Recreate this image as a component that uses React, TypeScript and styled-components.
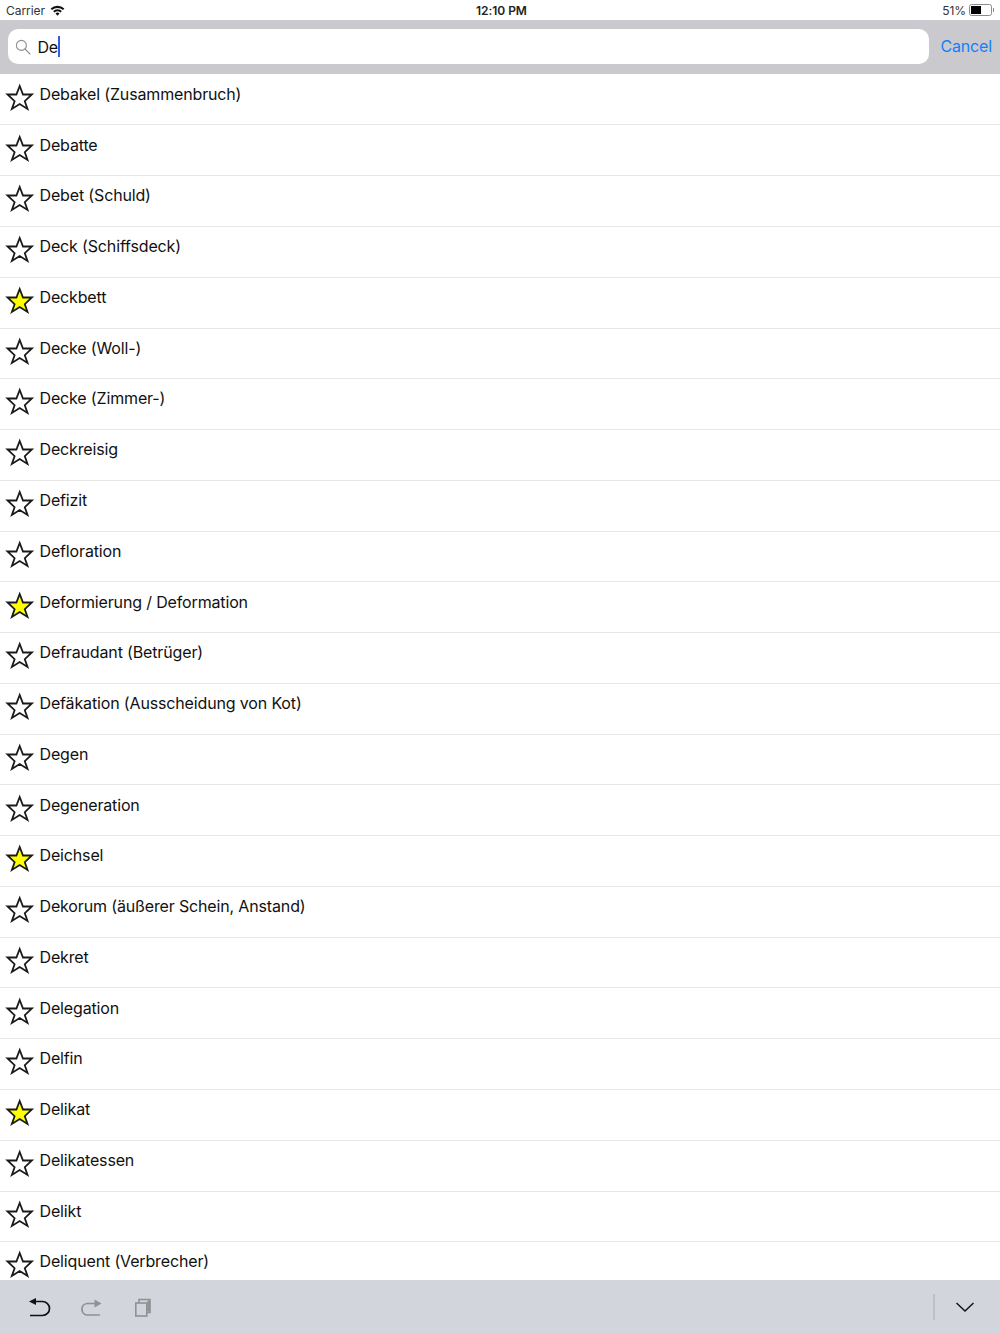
import React from 'react'
import styled, { createGlobalStyle } from 'styled-components'

const words: [string, boolean][] = [
  ['Debakel (Zusammenbruch)', false],
  ['Debatte', false],
  ['Debet (Schuld)', false],
  ['Deck (Schiffsdeck)', false],
  ['Deckbett', true],
  ['Decke (Woll-)', false],
  ['Decke (Zimmer-)', false],
  ['Deckreisig', false],
  ['Defizit', false],
  ['Defloration', false],
  ['Deformierung / Deformation', true],
  ['Defraudant (Betrüger)', false],
  ['Defäkation (Ausscheidung von Kot)', false],
  ['Degen', false],
  ['Degeneration', false],
  ['Deichsel', true],
  ['Dekorum (äußerer Schein, Anstand)', false],
  ['Dekret', false],
  ['Delegation', false],
  ['Delfin', false],
  ['Delikat', true],
  ['Delikatessen', false],
  ['Delikt', false],
  ['Deliquent (Verbrecher)', false],
]

export default function App() {
  return (
    <Screen>
      <GlobalStyle />
      <StatusBar>
        <StatusLeft>
          Carrier
          <svg width="15" height="11" viewBox="0 0 15 11">
            <path d="M0.6 3.6A10 10 0 0 1 14.4 3.6L13 5.1A8 8 0 0 0 2 5.1Z" fill="#111" />
            <path d="M3.1 6.1A6.4 6.4 0 0 1 11.9 6.1L10.5 7.6A4.4 4.4 0 0 0 4.5 7.6Z" fill="#111" />
            <path d="M5.5 8.5A2.9 2.9 0 0 1 9.5 8.5L7.5 10.7Z" fill="#111" />
          </svg>
        </StatusLeft>
        <Clock>12:10 PM</Clock>
        <StatusRight>
          51%
          <Battery>
            <BatteryLevel />
          </Battery>
          <BatteryCap />
        </StatusRight>
      </StatusBar>
      <SearchBar>
        <SearchField>
          <svg width="16" height="16" viewBox="0 0 16 16" fill="none" stroke="#8e8e93" strokeWidth="1.1">
            <circle cx="6.4" cy="6.4" r="5" />
            <path d="M10 10L15 15" strokeLinecap="round" />
          </svg>
          <SearchText>De</SearchText>
          <Caret />
        </SearchField>
        <CancelButton>Cancel</CancelButton>
      </SearchBar>
      <List>
        {words.map(([word, starred]) => (
          <Row key={word}>
            <Star width="30" height="30" viewBox="0 0 30 30">
              <path
                d="M14.7 3L18 11.5L26.9 11.5L19.8 18.2L22.5 25.9L14.7 21L6.9 25.9L9.6 18.2L2.5 11.5L11.4 11.5Z"
                fill={starred ? '#ffff00' : '#fff'}
                stroke="#1a1a1a"
                strokeWidth="1.8"
              />
            </Star>
            <Word>{word}</Word>
          </Row>
        ))}
      </List>
      <Toolbar>
        <ToolGroup>
          <svg width="24" height="22" viewBox="0 0 24 22" fill="none">
            <path d="M5 5.5H15.5A7 7 0 0 1 15.5 19.5H3" stroke="#111" strokeWidth="1.7" />
            <path d="M2 5.5L9 2V9Z" fill="#111" />
          </svg>
          <svg width="24" height="22" viewBox="0 0 24 22" fill="none">
            <path d="M18 7.5H7A5.8 5.8 0 0 0 7 19H20" stroke="#8f9194" strokeWidth="1.7" />
            <path d="M21.5 7.5L14.5 3.5V11.5Z" fill="#8f9194" />
          </svg>
          <svg width="20" height="22" viewBox="0 0 20 22" fill="none" stroke="#8f9194" strokeWidth="1.6">
            <rect x="2.8" y="7" width="11" height="13" />
            <path d="M6 7V3.5H17V16.5H14" />
            <path d="M15.6 4.5V15.5" strokeWidth="2.6" />
          </svg>
        </ToolGroup>
        <ToolEnd>
          <ToolDivider />
          <svg width="20" height="12" viewBox="0 0 20 12" fill="none" stroke="#111" strokeWidth="1.4">
            <path d="M1.5 2L10 10L18.5 2" />
          </svg>
        </ToolEnd>
      </Toolbar>
    </Screen>
  )
}

const GlobalStyle = createGlobalStyle`
  html, body {
    margin: 0;
    padding: 0;
    background: #fff;
  }
`

const Screen = styled.div`
  width: 1000px;
  height: 1334px;
  display: flex;
  flex-direction: column;
  overflow: hidden;
  font-family: Inter, "Liberation Sans", sans-serif;
  color: #111;
`

const StatusBar = styled.div`
  height: 20px;
  flex: none;
  display: grid;
  grid-template-columns: 1fr auto 1fr;
  align-items: center;
  padding: 0 6px;
  font-size: 12px;
  letter-spacing: -0.05px;
  background: #fff;
`

const StatusLeft = styled.div`
  display: flex;
  align-items: center;
  gap: 5px;
  color: #333;
`

const Clock = styled.div`
  font-weight: 600;
  margin-left: 3px;
  color: #222;
`

const StatusRight = styled.div`
  display: flex;
  align-items: center;
  justify-content: flex-end;
  color: #333;
`

const Battery = styled.div`
  width: 19px;
  height: 8px;
  margin-left: 3px;
  padding: 1px;
  border: 1px solid #8c8c8c;
  border-radius: 2.5px;
`

const BatteryLevel = styled.div`
  width: 10px;
  height: 100%;
  background: #000;
`

const BatteryCap = styled.div`
  width: 1px;
  height: 4px;
  margin-left: 1px;
  background: #8c8c8c;
`

const SearchBar = styled.div`
  height: 54px;
  flex: none;
  display: flex;
  align-items: center;
  padding: 0 8px 1px;
  background: #c9c9ce;
  box-sizing: border-box;
`

const SearchField = styled.div`
  flex: 1;
  height: 35px;
  display: flex;
  align-items: center;
  padding-left: 7px;
  border-radius: 10px;
  background: #fff;
`

const SearchText = styled.span`
  margin-left: 6.5px;
  font-size: 16px;
  letter-spacing: -0.2px;
`

const Caret = styled.span`
  width: 2px;
  height: 21px;
  margin-bottom: 1px;
  background: #2f5fe8;
`

const CancelButton = styled.span`
  margin: 0 0 1px 11px;
  font-size: 16px;
  letter-spacing: -0.15px;
  color: #157efb;
`

const List = styled.div`
  flex: 1;
  min-height: 0;
  overflow: hidden;
  box-sizing: border-box;
  padding-top: 0.7px;
  background: #fff;
`

const Row = styled.div`
  height: 50.78px;
  box-sizing: border-box;
  display: flex;
  align-items: flex-start;
  padding: 7.2px 0 0 5px;
  border-bottom: 1px solid #e6e6e6;
`

const Star = styled.svg`
  flex: none;
  margin-top: 1px;
`

const Word = styled.span`
  margin-left: 4.5px;
  font-size: 16px;
  letter-spacing: -0.15px;
  line-height: 24px;
`

const Toolbar = styled.div`
  height: 54px;
  flex: none;
  display: flex;
  align-items: center;
  justify-content: space-between;
  padding: 0 25px 0 27px;
  background: #d2d5db;
`

const ToolGroup = styled.div`
  display: flex;
  align-items: center;
  gap: 29px;
`

const ToolEnd = styled.div`
  display: flex;
  align-items: center;
  gap: 20px;
`

const ToolDivider = styled.div`
  width: 2px;
  height: 26px;
  background: #bfc1c6;
`
